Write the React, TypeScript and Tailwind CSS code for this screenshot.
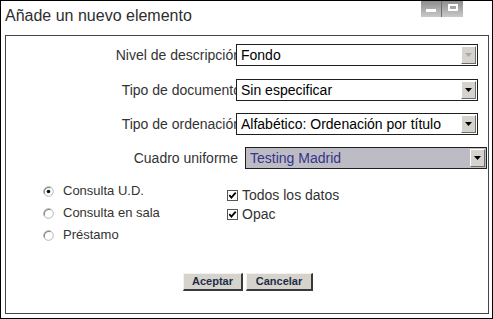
import React from 'react';

const SelectBox: React.FC<{ value: string; disabled?: boolean; shaded?: boolean; className?: string }> = ({
  value,
  disabled,
  shaded,
  className = '',
}) => (
  <div
    className={`relative z-10 flex items-center h-[22px] w-[242px] border border-[#1e1e1e] ${
      shaded ? 'bg-[#bdbcc4] text-[#34348a]' : 'bg-white text-black'
    } ${className}`}
  >
    <span className="pl-[4px] text-[14px] leading-none whitespace-nowrap">{value}</span>
    <div className="ml-auto mr-[1px] flex h-[18px] w-[15px] items-center justify-center border-t border-l border-t-white border-l-white border-r border-b border-r-[#6b6b6b] border-b-[#6b6b6b] bg-[#d6d3cc]">
      <svg width="7" height="4" viewBox="0 0 7 4">
        <polygon points="0,0 7,0 3.5,4" fill={disabled ? '#a8a8a8' : '#000'} />
      </svg>
    </div>
  </div>
);

const Radio: React.FC<{ checked?: boolean; label: string }> = ({ checked, label }) => (
  <div className="flex h-[22px] items-center">
    <svg width="11" height="11" viewBox="0 0 11 11" className="mr-[9px]">
      <circle cx="5.5" cy="5.5" r="4.8" fill="#fff" stroke="#b5b5b5" strokeWidth="1" />
      <path d="M1.6 7.5 A4.6 4.6 0 0 1 7.5 1.6" fill="none" stroke="#8a8a8a" strokeWidth="1.2" />
      {checked && <circle cx="5.5" cy="5.5" r="1.8" fill="#111" />}
    </svg>
    <span className="text-[13px] text-[#333]">{label}</span>
  </div>
);

const Check: React.FC<{ label: string }> = ({ label }) => (
  <div className="flex h-[19px] items-center">
    <svg width="11" height="11" viewBox="0 0 11 11" className="mr-[4px]">
      <rect x="0.5" y="0.5" width="10" height="10" fill="#fff" stroke="#555" />
      <path d="M2.3 5.2 L4.4 7.6 L8.7 2.7" fill="none" stroke="#000" strokeWidth="1.8" />
    </svg>
    <span className="text-[14px] text-[#333]">{label}</span>
  </div>
);

const Btn: React.FC<{ label: string; w: string }> = ({ label, w }) => (
  <button
    className={`${w} h-[18px] bg-[#d6d3cc] border-t border-l border-t-[#f2f2f2] border-l-[#f2f2f2] border-r-2 border-b-2 border-r-[#3a3a3a] border-b-[#3a3a3a] text-[11px] font-bold leading-none text-[#1d2c46]`}
  >
    {label}
  </button>
);

export default function App() {
  return (
    <div className="relative h-[319px] w-[493px] overflow-hidden border border-black bg-white font-['Liberation_Sans',Arial,sans-serif]">
      <div className="h-[34px] pl-[4px] pt-[5px] text-[16px] leading-[20px] text-[#2e2e2e]">
        Añade un nuevo elemento
      </div>

      <div className="absolute right-[29px] top-0 flex">
        <div className="flex h-[16px] w-[21px] items-center justify-center border-r border-[#6e6e6e] bg-gradient-to-b from-[#8e8e8e] to-[#c9c9c9]">
          <div className="mt-[2px] h-[3px] w-[10px] bg-white" />
        </div>
        <div className="flex h-[16px] w-[21px] justify-center bg-gradient-to-b from-[#8e8e8e] to-[#c9c9c9]">
          <div className="mt-[3px] h-[7px] w-[10px] border-2 border-white" />
        </div>
      </div>

      <div className="ml-[4px] mr-[3px] h-[279px] border border-[#454545] pt-[8px]">
        <div className="flex items-center">
          <span className="w-[235px] shrink-0 whitespace-nowrap text-right text-[14px] text-[#333]">Nivel de descripción</span>
          <SelectBox value="Fondo" disabled className="ml-[-5px]" />
        </div>
        <div className="mt-[13px] flex items-center">
          <span className="w-[235px] shrink-0 whitespace-nowrap text-right text-[14px] text-[#333]">Tipo de documento</span>
          <SelectBox value="Sin especificar" className="ml-[-5px]" />
        </div>
        <div className="mt-[12px] flex items-center">
          <span className="w-[235px] shrink-0 whitespace-nowrap text-right text-[14px] text-[#333]">Tipo de ordenación</span>
          <SelectBox value="Alfabético: Ordenación por título" className="ml-[-5px]" />
        </div>
        <div className="mt-[12px] flex items-center">
          <span className="w-[232px] shrink-0 whitespace-nowrap text-right text-[14px] text-[#333]">Cuadro uniforme</span>
          <SelectBox value="Testing Madrid" shaded className="ml-[7px]" />
        </div>

        <div className="mt-[11px] flex pl-[37px]">
          <div className="w-[184px]">
            <Radio checked label="Consulta U.D." />
            <Radio label="Consulta en sala" />
            <Radio label="Préstamo" />
          </div>
          <div className="mt-[6px]">
            <Check label="Todos los datos" />
            <Check label="Opac" />
          </div>
        </div>

        <div className="mt-[27px] flex gap-[3px] pl-[177px]">
          <Btn label="Aceptar" w="w-[60px]" />
          <Btn label="Cancelar" w="w-[67px]" />
        </div>
      </div>
    </div>
  );
}
